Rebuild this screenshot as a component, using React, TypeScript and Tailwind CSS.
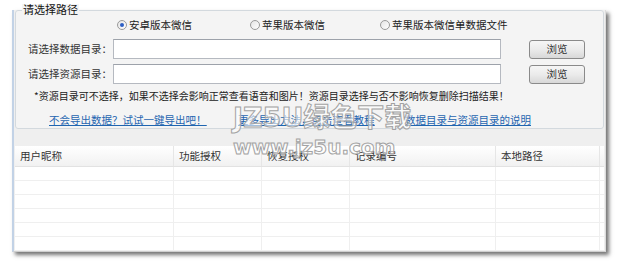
import React from "react";

const COLUMNS = [
  { title: "用户昵称", w: "w-[159px]" },
  { title: "功能授权", w: "w-[88px]" },
  { title: "恢复授权", w: "w-[88px]" },
  { title: "记录编号", w: "w-[146px]" },
  { title: "本地路径", w: "w-[104px]" },
];

const ROWS = [0, 1, 2, 3, 4, 5];

function Radio({ checked, label, className }: { checked?: boolean; label: string; className?: string }) {
  return (
    <label className={`flex items-center gap-[2px] ${className ?? ""}`}>
      <span className="flex h-[10px] w-[10px] items-center justify-center rounded-full border border-[#9a9a9a] bg-gradient-to-br from-[#e4e4e4] to-white">
        {checked && <span className="h-[4px] w-[4px] rounded-full bg-[#2d5fc4]" />}
      </span>
      <span>{label}</span>
    </label>
  );
}

function PathRow({ label, className }: { label: string; className?: string }) {
  return (
    <div className={`flex h-[20px] items-center pl-[12px] ${className ?? ""}`}>
      <span className="w-[85px] text-[#333]">{label}</span>
      <div className="h-[20px] w-[388px] border border-[#b5b9c0] border-t-[#9da2aa] bg-white" />
      <button className="ml-[28px] h-[19px] w-[56px] rounded-[3px] border border-[#8a8a8a] bg-gradient-to-b from-[#f6f6f6] via-[#ebebeb] to-[#d8d8d8] text-[#333]">
        浏览
      </button>
    </div>
  );
}

export default function App() {
  return (
    <div className="relative h-[263px] w-[618px] overflow-hidden bg-white pl-[12px] pt-[10px] font-['Noto_Sans_CJK_SC',sans-serif] text-[10.5px] leading-none text-[#222]">
      <div className="flex h-[242px] w-[594px] flex-col border-l-2 border-r border-b border-l-[#c2d2e6] border-r-[#dcdcdc] border-b-[#cfcfcf] bg-[#efefef] shadow-[3px_3px_4px_rgba(0,0,0,0.55)]">
        {/* 路径选择分组 */}
        <fieldset className="relative mx-[1px] h-[123px] rounded-[3px] border border-[#d3d9de] bg-[#f4f4f4]">
          <span className="absolute left-[6px] top-[-7px] bg-[#f4f4f4] px-[1px] text-[11px] text-[#111]">请选择路径</span>
          <div className="mt-[4px] flex h-[20px] items-center pl-[101px]">
            <Radio checked label="安卓版本微信" className="w-[133px]" />
            <Radio label="苹果版本微信" className="w-[130px]" />
            <Radio label="苹果版本微信单数据文件" />
          </div>
          <PathRow label="请选择数据目录：" className="mt-[4px]" />
          <PathRow label="请选择资源目录：" className="mt-[5px]" />
          <div className="mt-[4px] flex h-[16px] items-center pl-[18px] text-[10px] text-[#222]">
            *资源目录可不选择，如果不选择会影响正常查看语音和图片！资源目录选择与否不影响恢复删除扫描结果！
          </div>
          <div className="mt-[8px] flex h-[16px] items-center pl-[33px] text-[#1f65b0] underline">
            <a className="w-[189px]">不会导出数据？试试一键导出吧！</a>
            <a className="w-[167px]">更多导出方法，点击查看教程</a>
            <a>数据目录与资源目录的说明</a>
          </div>
        </fieldset>

        {/* 记录列表 */}
        <div className="mx-[1px] mt-[17px] flex-1 bg-white">
          <div className="flex h-[21px] border-b border-[#e2e2e2] bg-gradient-to-b from-white to-[#f1f1f1]">
            {COLUMNS.map((c) => (
              <div key={c.title} className={`${c.w} flex items-center border-r border-[#e6e6e6] pl-[5px] text-[#333]`}>
                {c.title}
              </div>
            ))}
            <div className="flex-1" />
          </div>
          {ROWS.map((r) => (
            <div key={r} className="flex h-[14px] border-b border-[#efefef]">
              {COLUMNS.map((c) => (
                <div key={c.title} className={`${c.w} border-r border-[#efefef]`} />
              ))}
              <div className="flex-1" />
            </div>
          ))}
        </div>
      </div>

      {/* 水印 */}
      <div className="pointer-events-none absolute left-[233px] top-[100px] flex flex-col items-start font-['DejaVu_Sans',sans-serif] font-bold text-[rgba(255,255,255,0.6)] [-webkit-text-stroke:1px_#a3a3a3]">
        <span className="text-[27px] leading-[32px]">JZ5U<span className="font-['Noto_Sans_CJK_SC',sans-serif]">绿色下载</span></span>
        <span className="mt-[3px] text-[20px] leading-[20px]">www.jz5u.com</span>
      </div>
    </div>
  );
}
